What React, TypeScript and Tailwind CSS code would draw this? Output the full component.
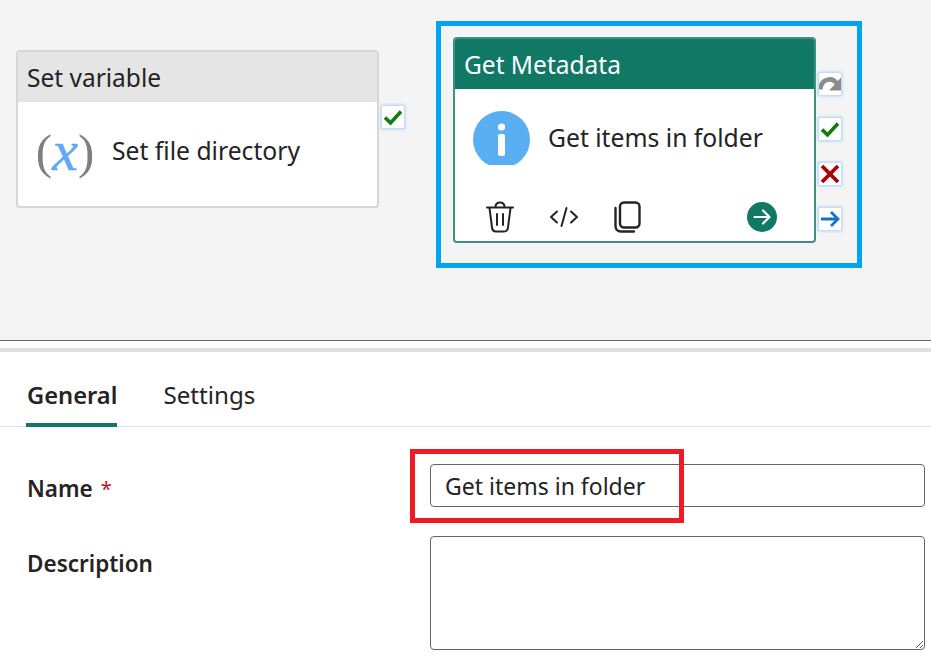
const font = { fontFamily: '"Noto Sans", sans-serif' };

function Port({ children }: { children: React.ReactNode }) {
  return (
    <div className="flex h-[24px] w-[24px] items-center justify-center overflow-hidden border border-[#c5dcf5] bg-white shadow-[0_0_3px_#a9cdf5]">
      {children}
    </div>
  );
}

function CheckIcon() {
  return (
    <svg width="20" height="18" viewBox="0 0 20 18" fill="none">
      <path d="M2 9.5 L7.5 15 L18 3.5" stroke="#107c10" strokeWidth="3.6" />
    </svg>
  );
}

function TrashIcon() {
  return (
    <svg width="28" height="32" viewBox="0 0 28 32" fill="none" stroke="#242424" strokeWidth="2" strokeLinecap="round">
      <path d="M1 6.5 H27" />
      <path d="M9.5 6 C9.5 3 11 1.5 14 1.5 C17 1.5 18.5 3 18.5 6" />
      <path d="M3.5 7 L6 26.5 C6.3 29 8 30.5 10 30.5 H18 C20 30.5 21.7 29 22 26.5 L24.5 7" />
      <path d="M11 13 V24 M17 13 V24" />
    </svg>
  );
}

function CodeIcon() {
  return (
    <svg width="30" height="24" viewBox="0 0 30 24" fill="none" stroke="#242424" strokeWidth="2" strokeLinecap="round" strokeLinejoin="round">
      <path d="M8 6.5 L2 12 L8 17.5" />
      <path d="M22 6.5 L28 12 L22 17.5" />
      <path d="M17.5 3 L12.5 21" />
    </svg>
  );
}

function CopyIcon() {
  return (
    <svg width="27" height="32" viewBox="0 0 27 32" fill="none" stroke="#242424" strokeWidth="2.4" strokeLinecap="round">
      <rect x="6" y="1.5" width="19.5" height="25" rx="4" />
      <path d="M1.5 7 V25 C1.5 28.5 4 30.5 7 30.5 H20" />
    </svg>
  );
}

function Card({ header, headerClass, borderClass, bodyClass, icon, label, footer, height }: {
  header: string;
  headerClass: string;
  borderClass: string;
  bodyClass: string;
  icon: React.ReactNode;
  label: string;
  footer?: React.ReactNode;
  height: string;
}) {
  return (
    <div className={`flex w-[363px] flex-col overflow-hidden rounded-[4px] border-2 bg-white ${borderClass} ${height}`}>
      <div className={`flex h-[50px] shrink-0 items-center pl-[9px] pt-[2px] text-[24.5px] ${headerClass}`}>{header}</div>
      <div className={`flex items-center ${bodyClass}`}>
        {icon}
        <span className="text-[24.7px] leading-[32px] text-[#242424]">{label}</span>
      </div>
      {footer}
    </div>
  );
}

export default function App() {
  return (
    <div className="h-[663px] w-[931px] overflow-hidden bg-white" style={font}>
      {/* Canvas */}
      <div className="flex h-[341px] items-start border-b border-[#666] bg-[#f4f4f4] pl-[16px]">
        <div className="mt-[50px]">
          <Card
            header="Set variable"
            headerClass="bg-[#e5e5e5] text-[#242424]"
            borderClass="border-[#d6d6d6]"
            bodyClass="mt-[23px]"
            height="h-[158px]"
            label="Set file directory"
            icon={
              <div className="ml-[17px] mr-[17px] flex h-[52px] w-[60px] items-center justify-center leading-none" style={{ fontFamily: '"Liberation Serif", serif' }}>
                <span className="text-[49px] text-[#7f7f7f]">(</span>
                <span className="text-[58px] italic text-[#62a8f3] [-webkit-text-stroke:0.5px_#62a8f3]">x</span>
                <span className="text-[49px] text-[#7f7f7f]">)</span>
              </div>
            }
          />
        </div>
        <div className="ml-[2px] mt-[105px]">
          <Port><CheckIcon /></Port>
        </div>

        {/* Selected activity */}
        <div className="ml-[31px] mt-[21px] flex h-[247px] w-[426px] border-[5px] border-[#00a4ef] pl-[12px] pt-[11px]">
          <Card
            header="Get Metadata"
            headerClass="bg-[#117865] text-white"
            borderClass="border-[#3f917f]"
            bodyClass="mt-[22px]"
            height="h-[206px]"
            label="Get items in folder"
            icon={
              <svg className="ml-[18px] mr-[18px] shrink-0" width="57" height="54" viewBox="0 0 57 54">
                <circle cx="28.5" cy="28.5" r="28.5" fill="#5aaff2" />
                <circle cx="28.5" cy="16" r="3.6" fill="#fff" />
                <rect x="25" y="23" width="7" height="22" rx="2" fill="#fff" />
              </svg>
            }
            footer={
              <div className="mt-auto mb-[8px] flex items-center pl-[31px]">
                <TrashIcon />
                <div className="ml-[35px]"><CodeIcon /></div>
                <div className="ml-[35px]"><CopyIcon /></div>
                <svg className="ml-[106px]" width="30" height="30" viewBox="0 0 30 30" fill="none">
                  <circle cx="15" cy="15" r="15" fill="#117865" />
                  <path d="M7.5 15 H22 M16 8.5 L22.5 15 L16 21.5" stroke="#fff" strokeWidth="2.2" strokeLinecap="round" strokeLinejoin="round" />
                </svg>
              </div>
            }
          />
          <div className="ml-[2px] mt-[35px] flex flex-col gap-[21px]">
            <Port>
              <svg width="24" height="22" viewBox="0 0 24 22" fill="none">
                <path d="M1.5 17 C2 6 14 2 20 11" stroke="#8c8c8c" strokeWidth="5" />
                <path d="M24 4 V18 H11 Z" fill="#8c8c8c" />
              </svg>
            </Port>
            <Port><CheckIcon /></Port>
            <Port>
              <svg width="20" height="20" viewBox="0 0 20 20" fill="none">
                <path d="M2 2 L18 18 M18 2 L2 18" stroke="#a80000" strokeWidth="3.8" />
              </svg>
            </Port>
            <Port>
              <svg width="20" height="18" viewBox="0 0 20 18" fill="none">
                <path d="M1 9 H18 M11 2 L18 9 L11 16" stroke="#1672c9" strokeWidth="2.8" />
              </svg>
            </Port>
          </div>
        </div>
      </div>

      {/* Properties */}
      <div className="mt-[7px] h-[4px] bg-[#e0e0e0]" />
      <div className="flex h-[75px] items-end gap-[46px] border-b border-[#e0e0e0] pl-[26px]">
        <div className="flex h-[47px] flex-col justify-between font-semibold leading-[32px] text-[#242424]">
          <span className="-mb-[1px] pl-[1px] text-[23.7px]">General</span>
          <div className="-mb-[1px] h-[4px] bg-[#117865]" />
        </div>
        <div className="h-[47px] text-[24.2px] leading-[32px] text-[#242424]">Settings</div>
      </div>

      <div className="relative grid grid-cols-[430px_495px] gap-y-[29px] pt-[37px]">
        <div className="flex items-center pl-[27px] pt-[6px] text-[22.5px] font-semibold text-[#242424]">
          Name<span className="ml-[8px] text-[20px] font-normal text-[#c50f1f]">*</span>
        </div>
        <input
          defaultValue="Get items in folder"
          className="h-[43px] w-[495px] rounded-[4px] border border-[#666] bg-white pl-[14px] text-[23px] text-[#242424] outline-none"
        />
        <div className="pl-[27px] pt-[8px] text-[22.5px] font-semibold leading-[40px] text-[#242424]">Description</div>
        <textarea className="h-[114px] w-[495px] rounded-[4px] border border-[#666] bg-white outline-none" />
        {/* Annotation over the field */}
        <div className="absolute left-[410px] top-[22px] h-[74px] w-[274px] border-[5px] border-[#ed1c24]" />
      </div>
    </div>
  );
}
